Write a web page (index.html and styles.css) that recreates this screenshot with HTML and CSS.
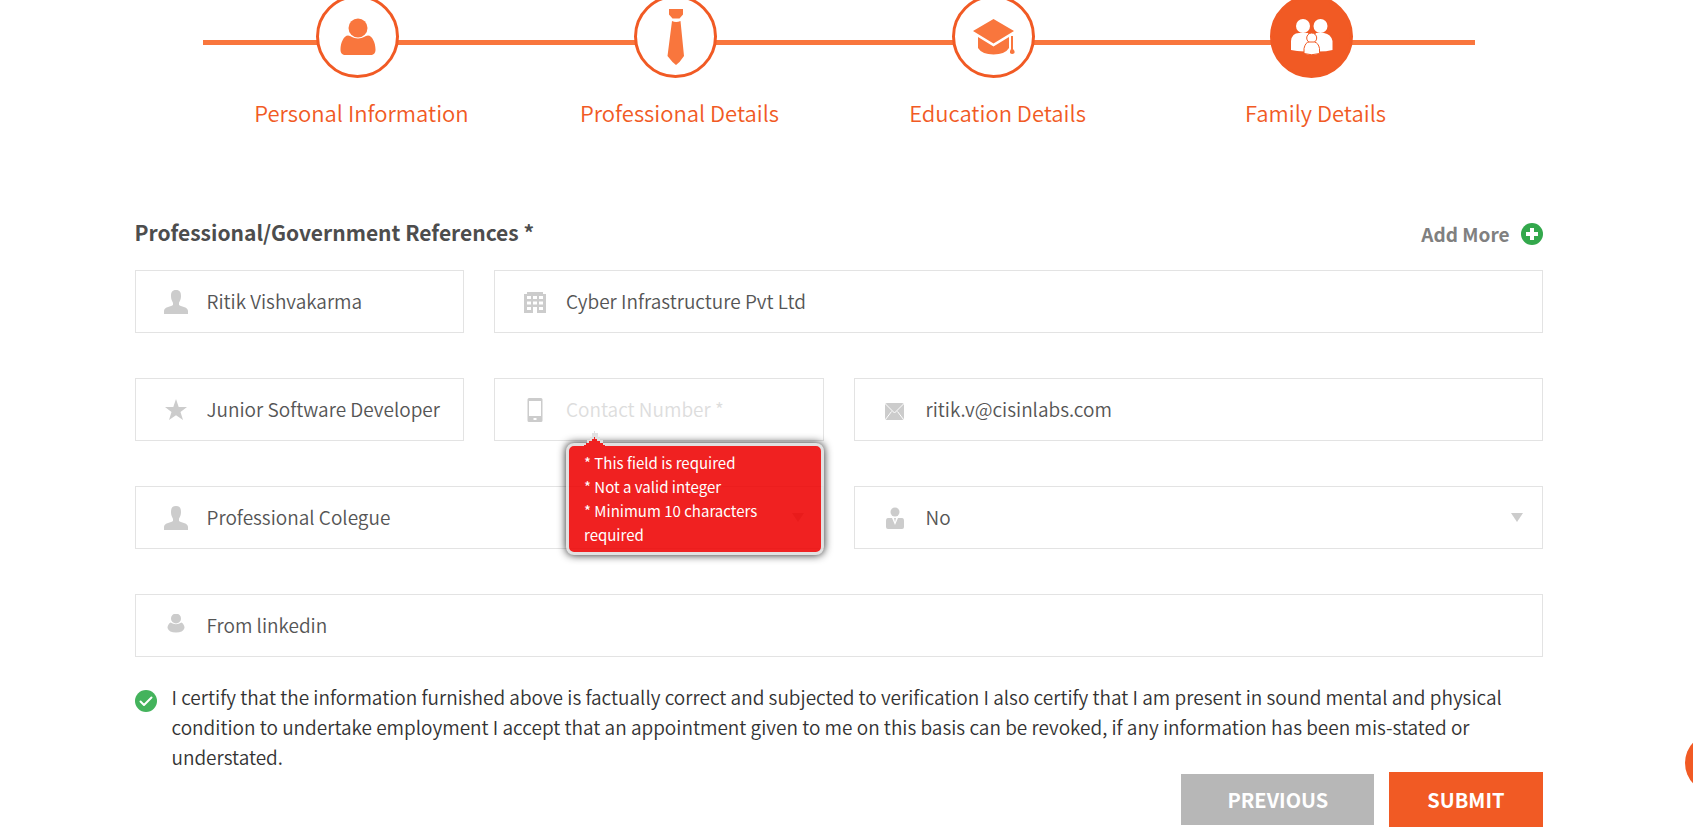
FILE: index.html
```html
<!DOCTYPE html>
<html lang="en">
<head>
<meta charset="utf-8">
<title>Family Details</title>
<link rel="stylesheet" href="styles.css">
</head>
<body>
<main class="page">
  <ol class="steps">
    <li class="step">
      <span class="step-circle">
        <svg width="36" height="38" viewBox="0 0 36 38"><circle cx="18" cy="10" r="9.5"/><path d="M8 17.500c3 0 4.500 3 10 3s7-3 10-3c4 0 7.500 7 7.500 14 0 4-2 5.500-5 5.500h-25c-3 0-5-1.500-5-5.500 0-7 3.500-14 7.500-14z"/></svg>
      </span>
      <span class="step-label">Personal Information</span>
    </li>
    <li class="step">
      <span class="step-circle">
        <svg width="18" height="58" viewBox="0 0 18 58"><path d="M2 1h14v5.500l-3.500 4h-7l-3.500-4zM5 13q4 2 8.500 0l3.500 35-4.500 6-3.500 3-3.500-3-5-6z"/></svg>
      </span>
      <span class="step-label">Professional Details</span>
    </li>
    <li class="step">
      <span class="step-circle">
        <svg width="42" height="38" viewBox="0 0 42 38"><path d="M20.500 1l20.500 12-20.500 12.500-20.500-12.500zM5 19l15.500 9.500 15.500-9.500v11q-4 6.500-15.500 6.500t-15.500-6.500zM38 18h2v13l1.500 2v2q-2.500 2-4.500 0v-2l1-2z"/></svg>
      </span>
      <span class="step-label">Education Details</span>
    </li>
    <li class="step">
      <span class="step-circle step-circle-active">
        <svg width="42" height="38" viewBox="0 0 42 38"><circle cx="12" cy="8" r="7"/><circle cx="29.500" cy="8" r="7"/><path d="M0 32v-9q1-8 8-8h9l4 8 4-8h8q7 1 8.500 8v9q-6 1.500-14 1.500h-14q-8-.5-13.500-1.500z"/><g class="child"><circle cx="20.700" cy="20" r="5"/><path d="M13 35.500v-5q1.500-6.500 5-6.500h5.500q4 1 5 6.500v5q-8 2.500-15.500 0z"/></g></svg>
      </span>
      <span class="step-label">Family Details</span>
    </li>
  </ol>

  <form>
    <header class="section-head">
      <h2>Professional/Government References *</h2>
      <button type="button" class="add-more">Add More
        <svg width="22" height="22" viewBox="0 0 22 22"><circle cx="11" cy="11" r="11"/><path d="M11 5v12M5 11h12"/></svg>
      </button>
    </header>

    <div class="fields">
      <div class="field">
        <svg class="icon" viewBox="0 0 24 24"><path d="M12 0c4 0 5 2.500 5 6 0 4-1.500 5-2 7v2c3 2 9 2 9 6v3h-24v-3c0-4 6-4 9-6v-2c-.5-2-2-3-2-7 0-3.500 1-6 5-6z"/></svg>
        <input type="text" aria-label="Name" value="Ritik Vishvakarma">
      </div>
      <div class="field span-9">
        <svg class="icon" viewBox="0 0 24 24"><path fill-rule="evenodd" d="M4 2h16v2h3v19h-22v-19h3zM4 6v3h4v-3zM10 6v3h4v-3zM16 6v3h4v-3zM4 11.500v3h4v-3zM10 11.500v3h4v-3zM16 11.500v3h4v-3zM4 17v3h4v-3zM16 17v3h4v-3zM10 17v6h4v-6z"/></svg>
        <input type="text" aria-label="Organization" value="Cyber Infrastructure Pvt Ltd">
      </div>
      <div class="field">
        <svg class="icon" viewBox="0 0 24 24"><path d="M12 1l2.700 8h8.300l-6.500 5 2.500 8-7-4.700-7 4.700 2.500-8-6.500-5h8.300z"/></svg>
        <input type="text" aria-label="Designation" value="Junior Software Developer">
      </div>
      <div class="field">
        <svg class="icon" viewBox="0 0 24 24"><path fill-rule="evenodd" d="M6 0h12q1.500 0 1.500 1.500v21q0 1.500-1.500 1.500h-12q-1.500 0-1.500-1.500v-21q0-1.500 1.500-1.500zM6 3v15h12v-15zM10.500 20v2h3v-2z"/></svg>
        <input type="text" aria-label="Contact Number" aria-describedby="contact-error" placeholder="Contact Number *">
        <div class="error" id="contact-error" role="alert">
          <svg class="error-arrow" width="22" height="17" viewBox="0 0 22 17"><path class="edge" d="M10 0h1v2h3v4h2v3h3v3h3v1h-22v-1h3v-3h3v-3h2v-4h2z"/><path class="body" d="M10 6h1v2h2v2h3v2h3v2h2v3h-21v-3h2v-2h3v-2h3v-2h2z"/></svg>
          <p>* This field is required</p>
          <p>* Not a valid integer</p>
          <p>* Minimum 10 characters required</p>
        </div>
      </div>
      <div class="field span-6">
        <svg class="icon" viewBox="0 0 24 24"><rect x="2" y="5" width="19" height="17" rx="2"/><path class="cut" d="M2 5.500l9.500 9.500 9.500-9.500M2.500 21.500l6-8M20.500 21.500l-6-8"/></svg>
        <input type="email" aria-label="Email" value="ritik.v@cisinlabs.com">
      </div>
      <div class="field span-6">
        <svg class="icon" viewBox="0 0 24 24"><path d="M12 0c4 0 5 2.500 5 6 0 4-1.500 5-2 7v2c3 2 9 2 9 6v3h-24v-3c0-4 6-4 9-6v-2c-.5-2-2-3-2-7 0-3.500 1-6 5-6z"/></svg>
        <select aria-label="Relationship"><option>Professional Colegue</option></select>
        <svg class="caret" width="12" height="9" viewBox="0 0 12 9"><path d="M0 0h12l-6 9z"/></svg>
      </div>
      <div class="field span-6">
        <svg class="icon" viewBox="0 0 24 24"><circle cx="12" cy="6" r="4.500"/><path d="M5 12h4l3 7 3-7h4q2 0 2 3v6q0 2-2 2h-14q-2 0-2-2v-6q0-3 2-3zM11 12h2l-1 4z"/></svg>
        <select aria-label="Related to employee"><option>No</option></select>
        <svg class="caret" width="12" height="9" viewBox="0 0 12 9"><path d="M0 0h12l-6 9z"/></svg>
      </div>
      <div class="field span-12">
        <svg class="icon" viewBox="0 0 24 24"><circle cx="12" cy="4.500" r="5"/><path d="M6.500 8.500q5.500 3.500 11 0 3 2 3 5.500-1.500 4.500-8.500 4.500t-8.500-4.500q0-3.500 3-5.500z"/></svg>
        <input type="text" aria-label="Source" value="From linkedin">
      </div>
    </div>

    <div class="certify">
      <span class="check">
        <input type="checkbox" id="certify" checked>
        <svg width="22" height="22" viewBox="0 0 22 22"><path d="M5.500 11.500l3.500 3.500 7.500-7.500"/></svg>
      </span>
      <label for="certify">I certify that the information furnished above is factually correct and subjected to verification I also certify that I am present in sound mental and physical condition to undertake employment I accept that an appointment given to me on this basis can be revoked, if any information has been mis-stated or understated.</label>
    </div>

    <div class="actions">
      <button type="button" class="btn btn-previous">PREVIOUS</button>
      <button type="submit" class="btn btn-submit">SUBMIT</button>
    </div>
  </form>
</main>
<button type="button" class="chat" aria-label="Open chat"></button>
</body>
</html>
```

FILE: styles.css
```css
* { box-sizing: border-box; }

body {
  margin: 0;
  padding-right: 16px;
  background: #fff;
  color: #333;
  font-family: "Noto Sans CJK SC", "Noto Sans", sans-serif;
  font-size: 19px;
  font-weight: 350;
  overflow: hidden;
}

button, input, select { font: inherit; }

.page {
  max-width: 1408px;
  margin: -5px auto 0;
}

.steps {
  display: grid;
  grid-template-columns: repeat(4, 1fr);
  margin: 0 68px;
  padding: 0;
  list-style: none;
  background: linear-gradient(#f9763d, #f9763d) 0 45px / 100% 5px no-repeat;
}

.step {
  display: flex;
  flex-direction: column;
  align-items: center;
  gap: 18px;
}

.step-circle {
  display: grid;
  place-items: center;
  width: 83px;
  height: 83px;
  margin-right: 8px;
  border: 3px solid #f15a24;
  border-radius: 50%;
  background: #fff;
  fill: #f9763d;
}

.step-circle-active {
  background: #f15a24;
  fill: #fff;
}

.child { stroke: #f15a24; stroke-width: 1; }

.step-label {
  color: #f15a24;
  font-size: 22px;
  line-height: 32px;
}

.section-head {
  display: flex;
  justify-content: space-between;
  align-items: center;
  margin: 87px 0 21px;
}

.section-head h2 {
  margin: 0;
  color: #4d4d4d;
  font-size: 21px;
  font-weight: 700;
  line-height: 34px;
}

.add-more {
  display: flex;
  align-items: center;
  gap: 11px;
  padding: 3px 0 0;
  border: 0;
  background: none;
  color: #808080;
  font-size: 19px;
  font-weight: 700;
  line-height: 30px;
}

.add-more circle { fill: #33a84c; }
.add-more path { stroke: #fff; stroke-width: 4; }

.fields {
  display: grid;
  grid-template-columns: repeat(12, 1fr);
  gap: 45px 30px;
}

.field {
  position: relative;
  display: flex;
  align-items: center;
  grid-column: span 3;
  height: 63px;
  padding-left: 28px;
  border: 1px solid #e3e3e3;
}

.span-6 { grid-column: span 6; }
.span-9 { grid-column: span 9; }
.span-12 { grid-column: span 12; }

.icon {
  flex: none;
  width: 24px;
  height: 24px;
  fill: #ccc;
}

.cut { fill: none; stroke: #fff; stroke-width: 1; }

.field input,
.field select {
  flex: 1;
  min-width: 0;
  height: 61px;
  margin: 0;
  padding: 0 0 2px 19px;
  border: 0;
  outline: 0;
  background: none;
  color: #555;
  appearance: none;
}

.field input::placeholder { color: #ddd; opacity: 1; }

.caret {
  position: absolute;
  right: 19px;
  fill: #ccc;
  pointer-events: none;
}

.error {
  position: absolute;
  z-index: 1;
  top: 64px;
  left: 71px;
  right: -1px;
  padding: 5px 15px;
  border: 3px solid #ddd;
  border-radius: 8px;
  background: #ee0101;
  box-shadow: 0 0 8px #000;
  color: #fff;
  font-size: 15px;
  font-weight: 400;
  line-height: 24px;
  opacity: .87;
}

.error p { margin: 0; }

.error-arrow {
  position: absolute;
  top: -15px;
  left: 15px;
}

.edge { fill: #ddd; }
.body { fill: #ee0101; }

.certify {
  display: flex;
  gap: 15px;
  margin-top: 25px;
  line-height: 30px;
}

.check {
  display: grid;
  flex: none;
  margin-top: 8px;
  height: 22px;
}

.check > * { grid-area: 1 / 1; }

.check input {
  width: 22px;
  height: 22px;
  margin: 0;
  border-radius: 50%;
  background: #44b35c;
  appearance: none;
}

.check svg {
  fill: none;
  stroke: #fff;
  stroke-width: 2;
  stroke-linecap: round;
  stroke-linejoin: round;
  pointer-events: none;
}

.actions {
  display: flex;
  justify-content: flex-end;
  align-items: center;
  gap: 15px;
}

.btn {
  border: 0;
  color: #fff;
  font-size: 20px;
  font-weight: 700;
  line-height: 31px;
}

.btn-previous { padding: 10px 46px; background: #b7b7b7; }
.btn-submit { padding: 12px 38px; background: #f15a24; }

.chat {
  position: fixed;
  right: -52px;
  bottom: 38px;
  width: 60px;
  height: 60px;
  border: 0;
  border-radius: 50%;
  background: #f15a24;
}
```
